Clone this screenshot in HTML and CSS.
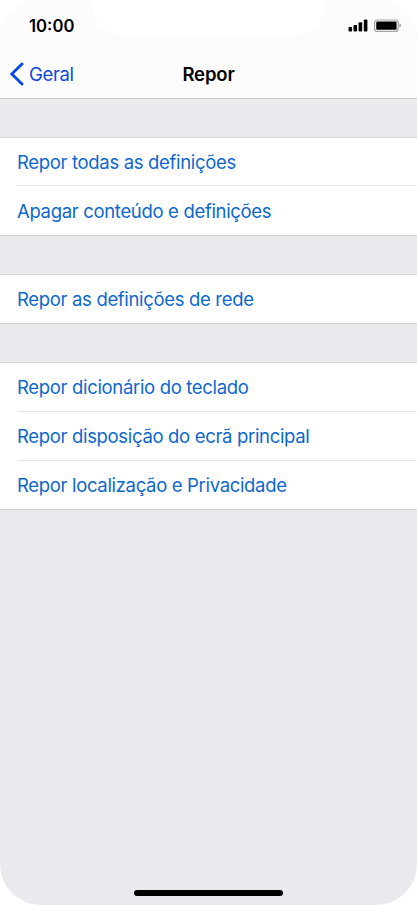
FILE: index.html
```html
<!DOCTYPE html>
<html lang="pt">
<head>
<meta charset="utf-8">
<title>Repor</title>
<link rel="stylesheet" href="styles.css">
</head>
<body>
<div class="phone">
  <header class="header">
    <svg class="notch" width="250" height="34" viewBox="0 0 250 34" aria-hidden="true"><path d="M0 0C4 0 8 1 8.500 6C10 23 18 34 37 34H213C232 34 240 23 241.500 6C242 1 246 0 250 0Z" fill="#fff"/></svg>
    <div class="status">
      <span class="time">10:00</span>
      <svg class="indicators" width="54" height="14" viewBox="0 0 54 14" aria-hidden="true">
        <rect x="0.500" y="8" width="3.600" height="4.500" rx="1"/>
        <rect x="5.500" y="6" width="3.600" height="6.500" rx="1"/>
        <rect x="10.600" y="3.300" width="3.600" height="9.200" rx="1"/>
        <rect x="15.800" y="0.600" width="3.600" height="11.900" rx="1"/>
        <rect x="26.600" y="1" width="23.600" height="11.400" rx="3" fill="none" stroke="#a3a3a3" stroke-width="1.200"/>
        <rect x="28.200" y="2.600" width="20.400" height="8.200" rx="1.200"/>
        <path d="M51.500 4.600C53.400 5.300 53.400 8.100 51.500 8.800Z" fill="#8e8e8e"/>
      </svg>
    </div>
    <nav class="navbar">
      <a class="back"><svg width="14" height="24" viewBox="0 0 14 24" aria-hidden="true"><path d="M12 2L1.800 12L12 22" fill="none" stroke="currentColor" stroke-width="3" stroke-linecap="round"/></svg><span>Geral</span></a>
      <h1 class="title">Repor</h1>
    </nav>
  </header>
  <main>
    <ul class="group erase">
      <li class="row">Repor todas as definições</li>
      <li class="row">Apagar conteúdo e definições</li>
    </ul>
    <ul class="group">
      <li class="row">Repor as definições de rede</li>
    </ul>
    <ul class="group">
      <li class="row">Repor dicionário do teclado</li>
      <li class="row">Repor disposição do ecrã principal</li>
      <li class="row">Repor localização e Privacidade</li>
    </ul>
  </main>
  <div class="home"></div>
</div>
</body>
</html>
```
FILE: styles.css
```css
* { box-sizing: border-box; }
body { margin: 0; background: #fff; font-family: Inter, "Liberation Sans", sans-serif; }
.phone {
  width: 417px;
  height: 905px;
  display: flex;
  flex-direction: column;
  background: #eae9ee;
  border-radius: 41px;
  overflow: hidden;
}
.header {
  position: relative;
  height: 99px;
  background: #fcfcfc;
  border-bottom: 1px solid #cbcbce;
}
.notch { position: absolute; top: 0; left: 84px; }
.status {
  position: relative;
  height: 50px;
  padding: 2px 15px 0 29px;
  display: flex;
  align-items: center;
  justify-content: space-between;
}
.time { font-size: 16.7px; font-weight: 600; }
.navbar {
  height: 47px;
  display: grid;
  grid-template-columns: 1fr auto 1fr;
  align-items: center;
  padding: 0 10px;
}
.back {
  display: flex;
  align-items: center;
  gap: 5px;
  color: #0a4ae0;
  font-size: 18.5px;
  letter-spacing: -0.35px;
}
.title { margin: 0; font-size: 18.5px; font-weight: 600; letter-spacing: -0.15px; }
.group {
  list-style: none;
  margin: 38px 0 0;
  padding: 0 0 0 17px;
  background: #fff;
  border-top: 1px solid #d9d9dc;
  border-bottom: 1px solid #d0d0d4;
}
.row {
  height: 48px;
  display: flex;
  align-items: center;
  color: #0d68ce;
  font-size: 18.5px;
  letter-spacing: -0.33px;
  white-space: nowrap;
}
.row + .row { height: 49px; border-top: 1px solid #e4e4e6; }
.erase .row:first-child { height: 47px; padding-top: 1px; }
.erase .row:last-child { height: 50px; padding-top: 1px; }
.home {
  width: 149px;
  height: 6px;
  margin: auto auto 9px;
  border-radius: 3px;
  background: #000;
}
```
